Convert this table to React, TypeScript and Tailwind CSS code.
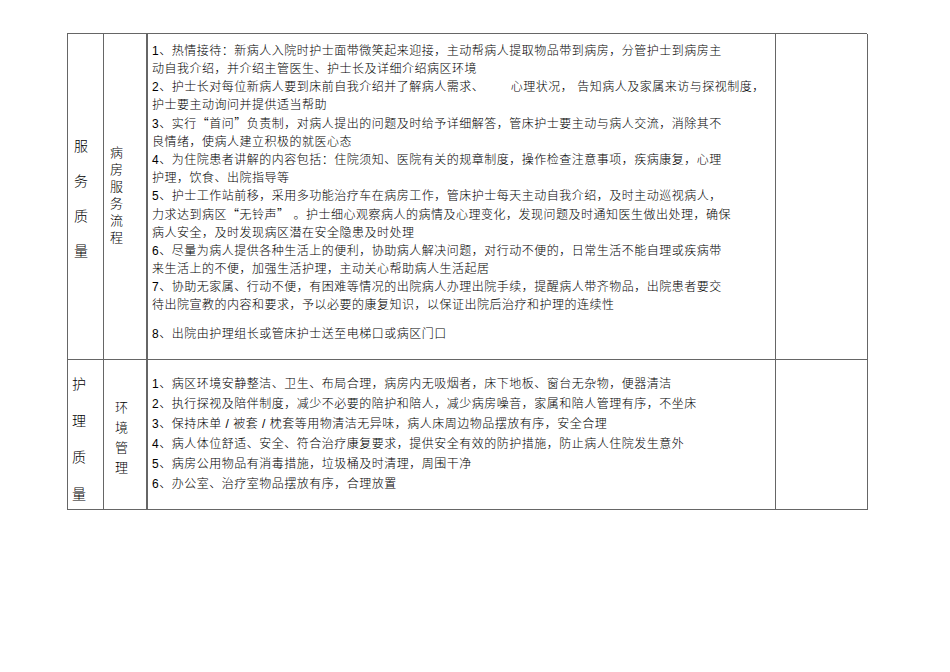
const serviceLines: { text: string; gap?: boolean }[] = [
  { text: "1、热情接待：新病人入院时护士面带微笑起来迎接，主动帮病人提取物品带到病房，分管护士到病房主" },
  { text: "动自我介绍，并介绍主管医生、护士长及详细介绍病区环境" },
  { text: "2、护士长对每位新病人要到床前自我介绍并了解病人需求、\u3000\u3000  心理状况， 告知病人及家属来访与探视制度，" },
  { text: "护士要主动询问并提供适当帮助" },
  { text: "3、实行“首问”负责制，对病人提出的问题及时给予详细解答，管床护士要主动与病人交流，消除其不" },
  { text: "良情绪，使病人建立积极的就医心态" },
  { text: "4、为住院患者讲解的内容包括：住院须知、医院有关的规章制度，操作检查注意事项，疾病康复，心理" },
  { text: "护理，饮食、出院指导等" },
  { text: "5、护士工作站前移，采用多功能治疗车在病房工作，管床护士每天主动自我介绍，及时主动巡视病人，" },
  { text: "力求达到病区“无铃声” 。护士细心观察病人的病情及心理变化，发现问题及时通知医生做出处理，确保" },
  { text: "病人安全，及时发现病区潜在安全隐患及时处理" },
  { text: "6、尽量为病人提供各种生活上的便利，协助病人解决问题，对行动不便的，日常生活不能自理或疾病带" },
  { text: "来生活上的不便，加强生活护理，主动关心帮助病人生活起居" },
  { text: "7、协助无家属、行动不便，有困难等情况的出院病人办理出院手续，提醒病人带齐物品，出院患者要交" },
  { text: "待出院宣教的内容和要求，予以必要的康复知识，以保证出院后治疗和护理的连续性" },
  { text: "8、出院由护理组长或管床护士送至电梯口或病区门口", gap: true },
];

const envLines = [
  "1、病区环境安静整洁、卫生、布局合理，病房内无吸烟者，床下地板、窗台无杂物，便器清洁",
  "2、执行探视及陪伴制度，减少不必要的陪护和陪人，减少病房噪音，家属和陪人管理有序，不坐床",
  "3、保持床单 / 被套 / 枕套等用物清洁无异味，病人床周边物品摆放有序，安全合理",
  "4、病人体位舒适、安全、符合治疗康复要求，提供安全有效的防护措施，防止病人住院发生意外",
  "5、病房公用物品有消毒措施，垃圾桶及时清理，周围干净",
  "6、办公室、治疗室物品摆放有序，合理放置",
];

// curly quotes need the CJK face to come out full width
function Line({ text }: { text: string }) {
  const parts = text.split(/([“”])/);
  return (
    <>
      {parts.map((p, i) =>
        p === "“" || p === "”" ? (
          <span key={i} className="font-['Noto_Sans_CJK_SC']">
            {p}
          </span>
        ) : (
          p
        ),
      )}
    </>
  );
}

function Stack({ chars, className }: { chars: string; className: string }) {
  return (
    <div className={className}>
      {chars.split("").map((c, i) => (
        <div key={i}>{c}</div>
      ))}
    </div>
  );
}

export default function App() {
  return (
    <div
      className="min-h-[672px] w-[950px] bg-white pl-[67px] pt-[33px] text-[12px] font-light tracking-[0.5px] text-black"
      style={{ fontFamily: '"Liberation Sans", "Noto Sans CJK SC", sans-serif' }}
    >
      <div className="grid w-[800px] grid-cols-[36px_44px_628px_92px] grid-rows-[326px_150px] border-l border-t border-[#666]">
        {/* 服务质量 */}
        <Stack chars="服务质量" className="border-b border-r border-[#666] pl-[6px] pt-[95px] text-[14px] leading-[35px]" />
        <Stack chars="病房服务流程" className="border-b border-r-2 border-[#666] pl-[6px] pt-[110px] text-[13px] leading-[17px]" />
        <div className="border-b border-r border-[#666] pl-[4px] pt-[8px] leading-[18px] whitespace-pre">
          {serviceLines.map((l, i) => (
            <div key={i} className={l.gap ? "mt-[11px]" : ""}>
              <Line text={l.text} />
            </div>
          ))}
        </div>
        <div className="border-b border-r border-[#666]" />

        {/* 护理质量 */}
        <Stack chars="护理质量" className="border-b border-r border-[#666] pl-[4px] pt-[6px] text-[14px] leading-[36.5px]" />
        <Stack chars="环境管理" className="border-b border-r-2 border-[#666] pl-[11px] pt-[38px] text-[13px] leading-[20px]" />
        <div className="border-b border-r border-[#666] pl-[4px] pt-[14px] leading-[20px] whitespace-pre">
          {envLines.map((t, i) => (
            <div key={i}>{t}</div>
          ))}
        </div>
        <div className="border-b border-r border-[#666]" />
      </div>
    </div>
  );
}
